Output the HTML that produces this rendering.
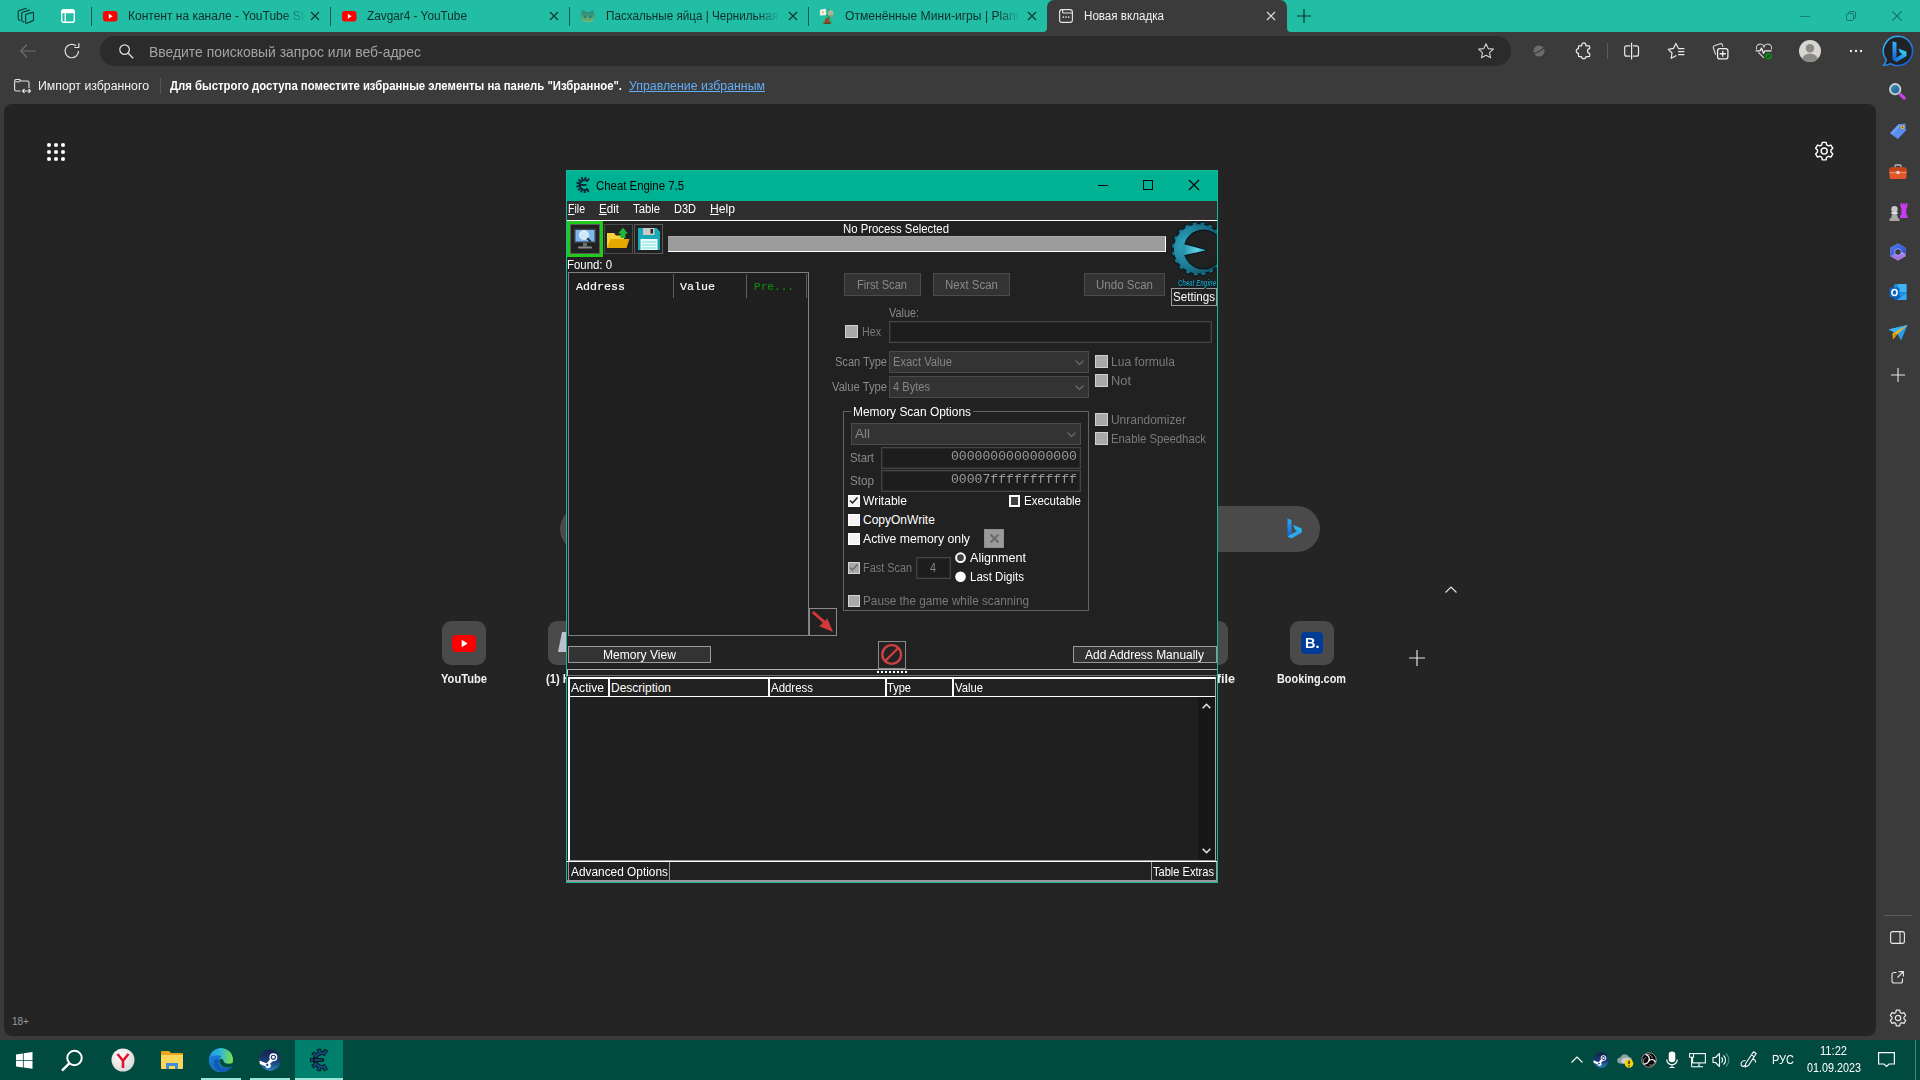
<!DOCTYPE html>
<html lang="ru"><head><meta charset="utf-8"><title>screen</title>
<style>

*{margin:0;padding:0;box-sizing:border-box}
html,body{width:1920px;height:1080px;overflow:hidden;background:#3b3b3b;font-family:"Liberation Sans",sans-serif}
.a{position:absolute}
.t{position:absolute;white-space:nowrap;transform-origin:0 50%;display:block;font-size:12px;line-height:16px;color:#fff}
.m{font-family:"Liberation Mono",monospace}
svg{position:absolute;overflow:visible}
/* browser */
#tabbar{left:0;top:0;width:1920px;height:32px;background:#21bda4}
#acttab{left:1047px;top:0;width:240px;height:33px;background:#3b3b3b;border-radius:7px 7px 0 0}
#addr{left:100px;top:36px;width:1411px;height:30px;border-radius:15px;background:#2b2b2b}
#content{left:4px;top:104px;width:1872px;height:932px;background:#242424;border-radius:8px}
#taskbar{left:0;top:1040px;width:1920px;height:40px;background:#014a3f}
/* cheat engine */
#ce{left:566px;top:170px;width:652px;height:713px;background:#212121;border:1px solid #1bb79d}
#cetitle{left:567px;top:171px;width:650px;height:30px;background:#00b294}
#cemenu{left:567px;top:201px;width:650px;height:19px;background:#2f2f2f}
.btn{position:absolute;background:#333;border:1px solid #4c4c4c}
.btnw{position:absolute;background:#333;border:1px solid #9a9a9a}
.inp{position:absolute;background:#1d1d1d;border:1px solid #454545;box-shadow:inset 0 0 0 1px #2a2a2a}
.cmb{position:absolute;background:#333;border:1px solid #4a4a4a}
.cbg{position:absolute;width:12px;height:12px;background:#a9a9a9;border:1px solid #cfcfcf}
.cbw{position:absolute;width:12px;height:12px;background:#f4f4f4;border:1px solid #fff}

</style></head><body>

<div class="a" id="tabbar"></div>
<div class="a" id="acttab"></div>
<div class="a" id="addr"></div>
<div class="a" id="content"></div>
<div class="a" id="taskbar"></div>
<div class="a" style="left:91px;top:7px;width:1px;height:19px;background:#14594e"></div>
<div class="a" style="left:330px;top:7px;width:1px;height:19px;background:#14594e"></div>
<div class="a" style="left:569px;top:7px;width:1px;height:19px;background:#14594e"></div>
<div class="a" style="left:808px;top:7px;width:1px;height:19px;background:#14594e"></div>
<svg style="left:1043px;top:28px" width="4" height="4"><path d="M4 0V4H0A4 4 0 0 0 4 0Z" fill="#3b3b3b"/></svg>
<svg style="left:1287px;top:28px" width="4" height="4"><path d="M0 0V4H4A4 4 0 0 1 0 0Z" fill="#3b3b3b"/></svg>
<svg style="left:0px;top:0px" width="40" height="32" viewBox="0 0 40 32" ><g fill="none" stroke="#123a33" stroke-width="1.150" stroke-linejoin="round" stroke-linecap="round"><path d="M26.300 14.300L32.500 12.400Q33.500 12.100 33.500 13.200V19.800Q33.500 20.600 32.700 20.900L26.800 23.300Q25.600 23.700 25.600 22.600V15.300Q25.600 14.500 26.300 14.300Z"/><path d="M29.400 10.100L22.500 12.300Q21.700 12.600 21.700 13.400V20.300Q21.700 21.100 22.500 21.500L23.800 22"/><path d="M26.300 8.200L19 10.600Q18.200 10.900 18.200 11.700V18.700Q18.200 19.500 19 19.900L20 20.400"/></g></svg>
<svg style="left:61px;top:9px" width="14" height="14" viewBox="0 0 14 14" ><rect x="0.7" y="0.7" width="12.6" height="12.6" rx="2" fill="none" stroke="#fff" stroke-width="1.4"/><path d="M0.7 4.2H13.3V2.7a2 2 0 0 0-2-2H2.7a2 2 0 0 0-2 2Z" fill="#fff"/><path d="M4.2 4V13.3" stroke="#fff" stroke-width="1.3"/></svg>
<svg style="left:102.75px;top:10.75px" width="14.5" height="10.5" viewBox="0 0 14.5 10.5" ><rect width="14.5" height="10.5" rx="3" fill="#f00"/><path d="M5.80 2.83L9.57 5.25L5.80 7.67Z" fill="#fff"/></svg>
<svg style="left:341.75px;top:10.75px" width="14.5" height="10.5" viewBox="0 0 14.5 10.5" ><rect width="14.5" height="10.5" rx="3" fill="#f00"/><path d="M5.80 2.83L9.57 5.25L5.80 7.67Z" fill="#fff"/></svg>
<svg style="left:580px;top:9px" width="16" height="15" viewBox="0 0 16 15" ><defs><linearGradient id="bn" x1="0" y1="0" x2="0" y2="1"><stop offset="0" stop-color="#2b8777"/><stop offset="0.450" stop-color="#3f9a7c"/><stop offset="1" stop-color="#86bd6c"/></linearGradient></defs><path d="M2.600 1.200C4 1.400 5 2.300 5.600 3.200Q7.700 2.500 9.800 3.200C10.400 2.300 11.400 1.400 12.800 1.200C14.300 3.300 14.800 5.600 14.600 8A7 6.300 0 0 1 0.800 8C0.600 5.600 1.100 3.300 2.600 1.200Z" fill="url(#bn)"/><ellipse cx="5" cy="7.700" rx="1.100" ry="1.500" fill="#2b7d72"/><ellipse cx="10.400" cy="7.700" rx="1.100" ry="1.500" fill="#2b7d72"/><path d="M4.600 10.800Q7.700 13 10.800 10.800" stroke="#5aa06a" stroke-width="0.900" fill="none"/></svg>
<svg style="left:819px;top:8px" width="16" height="16" viewBox="0 0 16 16" ><path d="M8.500 1L10.500 0.500L9.500 3.500Z" fill="#2f9a3c"/><path d="M5 5L12 8.500L10 11L8 8Z" fill="#2f9a3c"/><ellipse cx="11.700" cy="5.300" rx="2.700" ry="3.200" fill="#aab59a"/><path d="M10 7L13.500 6.500L14.200 11.500L12.800 9.300Z" fill="#8f9c86"/><circle cx="2.800" cy="3.200" r="1.900" fill="#f4ecec"/><circle cx="5.300" cy="2.600" r="1.900" fill="#f4ecec"/><circle cx="2.600" cy="5.800" r="1.900" fill="#f4ecec"/><circle cx="5.500" cy="5.500" r="1.900" fill="#f4ecec"/><circle cx="4" cy="4.300" r="1.900" fill="#f7eeee"/><circle cx="4" cy="4.300" r="1" fill="#e8c21a"/><path d="M6.500 10L10 10L11 15L5.500 15Z" fill="#9a4a2a"/><path d="M5 14.500L11.500 14.500L12 16L4.500 16Z" fill="#7a3a22"/><path d="M3.500 15.500L5.500 12.500L6 15.500ZM10.500 15.500L12 12.800L12.500 15.500Z" fill="#2f8f2f"/></svg>
<svg style="left:311px;top:12px" width="8" height="8" viewBox="0 0 8 8" ><path d="M0 0L8 8M8 0L0 8" stroke="#10332d" stroke-width="1.1" fill="none"/></svg>
<svg style="left:550px;top:12px" width="8" height="8" viewBox="0 0 8 8" ><path d="M0 0L8 8M8 0L0 8" stroke="#10332d" stroke-width="1.1" fill="none"/></svg>
<svg style="left:789px;top:12px" width="8" height="8" viewBox="0 0 8 8" ><path d="M0 0L8 8M8 0L0 8" stroke="#10332d" stroke-width="1.1" fill="none"/></svg>
<svg style="left:1028px;top:12px" width="8" height="8" viewBox="0 0 8 8" ><path d="M0 0L8 8M8 0L0 8" stroke="#10332d" stroke-width="1.1" fill="none"/></svg>
<svg style="left:1267px;top:12px" width="8" height="8" viewBox="0 0 8 8" ><path d="M0 0L8 8M8 0L0 8" stroke="#e6e6e6" stroke-width="1.1" fill="none"/></svg>
<svg style="left:1059px;top:9px" width="14" height="14" viewBox="0 0 14 14" ><rect x="0.6" y="0.6" width="12.8" height="12.8" rx="2.4" fill="none" stroke="#e8e8e8" stroke-width="1.1"/><path d="M3.6 0.8V3a1 1 0 0 0 1 1H13.300" fill="none" stroke="#e8e8e8" stroke-width="1.1"/><circle cx="4.300" cy="8" r="0.85" fill="#e8e8e8"/><circle cx="7" cy="8" r="0.85" fill="#e8e8e8"/><circle cx="9.700" cy="8" r="0.85" fill="#e8e8e8"/></svg>
<svg style="left:1297px;top:9px" width="14" height="14" viewBox="0 0 14 14" ><path d="M7 0V14M0 7H14" stroke="#10332d" stroke-width="1.2"/></svg>
<div class="a" style="left:1800px;top:16px;width:10px;height:1px;background:#17806f"></div>
<svg style="left:1846px;top:11px" width="10" height="10" viewBox="0 0 10 10" ><rect x="0.500" y="2.500" width="7" height="7" rx="1.400" fill="none" stroke="#167a6a" stroke-width="1"/><path d="M2.500 2.300V1.900a1.400 1.400 0 0 1 1.400-1.400H8.100a1.400 1.400 0 0 1 1.400 1.400V6.100a1.400 1.400 0 0 1-1.400 1.400H7.700" fill="none" stroke="#167a6a" stroke-width="1"/></svg>
<svg style="left:1892px;top:11px" width="10" height="10" viewBox="0 0 10 10" ><path d="M0.300 0.300L9.700 9.700M9.700 0.300L0.300 9.700" stroke="#176a5d" stroke-width="1.050"/></svg>
<svg style="left:20px;top:44px" width="16" height="14" viewBox="0 0 16 14" ><path d="M16 7H1M7 0.500L0.700 7L7 13.500" fill="none" stroke="#6f6f6f" stroke-width="1.1"/></svg>
<svg style="left:64px;top:43px" width="16" height="16" viewBox="0 0 16 16" ><path d="M14.5 8A6.700 6.700 0 1 1 12 2.800" fill="none" stroke="#e4e4e4" stroke-width="1.2"/><path d="M10.300 3.300H14.800V-1" fill="none" stroke="#e4e4e4" stroke-width="1.200" transform="translate(0,1.200)"/></svg>
<svg style="left:119px;top:44px" width="15" height="15" viewBox="0 0 15 15" ><circle cx="5.600" cy="5.600" r="4.800" fill="none" stroke="#e4e4e4" stroke-width="1.200"/><path d="M9.200 9.200L14.200 14.200" stroke="#e4e4e4" stroke-width="1.300"/></svg>
<svg style="left:1478px;top:43px" width="16" height="16" viewBox="0 0 16 16" ><path d="M8 0.800L10.200 5.600L15.400 6.100L11.500 9.700L12.600 14.800L8 12.200L3.400 14.800L4.500 9.700L0.600 6.100L5.800 5.600Z" fill="none" stroke="#cfcfcf" stroke-width="1.100" stroke-linejoin="round"/></svg>
<svg style="left:1533px;top:45px" width="12" height="12" viewBox="0 0 12 12" ><circle cx="6" cy="6" r="5.600" fill="#6b6b6b"/><path d="M1 8.500Q6 7 11 3.200" stroke="#3b3b3b" stroke-width="1.200" fill="none"/></svg>
<div class="a" style="left:1607px;top:43px;width:1px;height:16px;background:#5a5a5a"></div>
<svg style="left:1570px;top:38px" width="120" height="26" viewBox="0 0 120 26" ><g fill="none" stroke="#eaeaea" stroke-width="1.200" stroke-linejoin="round" stroke-linecap="round"><path d="M9.300 7.800H11.600C11.600 4 15.900 4 15.900 7.800H18.900Q19.700 7.800 19.700 8.600V10.600C16.800 10.600 16.800 15.300 19.700 15.300V17.900Q19.700 18.700 18.900 18.700H15.900C15.900 21.300 11.600 21.300 11.600 18.700H9.300Q8.500 18.700 8.500 17.900V15.300C5.500 15.300 5.500 10.600 8.500 10.600V8.600Q8.500 7.800 9.300 7.800Z"/><path d="M59.800 7.800H56.700a2 2 0 0 0-2 2V16.200a2 2 0 0 0 2 2H59.800M63.400 7.800H66.500a2 2 0 0 1 2 2V16.200a2 2 0 0 1-2 2H63.400M61.600 5V21"/><path d="M108.200 10L105.900 5.400L103.400 10.400L98.300 11.300L102 15L101.200 20.300L106 17.700"/><path d="M108.600 10.600H114M108.600 13.600H114M108.600 16.600H114"/></g></svg>
<svg style="left:1712px;top:43px" width="17" height="17" viewBox="0 0 17 17" ><rect x="5.600" y="5.600" width="10.300" height="10.300" rx="2.200" fill="none" stroke="#f2f2f2" stroke-width="1.250"/><path d="M10.750 7.700V13.800M7.700 10.750H13.800" stroke="#f2f2f2" stroke-width="1.300"/><path d="M3.700 11.800L1.300 4.800a1.700 1.700 0 0 1 1.100-2.100L8.200 0.800a1.700 1.700 0 0 1 2.100 1L11 3.600" fill="none" stroke="#dcdcdc" stroke-width="1.100"/></svg>
<svg style="left:1755px;top:43px" width="18" height="17" viewBox="0 0 18 17" ><path d="M9 14.800L3.500 9.500M1.600 6.300A3.900 3.900 0 0 1 9 3.800A3.900 3.900 0 0 1 16.400 6.300" fill="none" stroke="#dcdcdc" stroke-width="1.050"/><path d="M0.700 7.800H5.200L6.500 5L8.500 10.300L10 7.800H16.500" fill="none" stroke="#f4f4f4" stroke-width="1.250" stroke-linejoin="round"/><circle cx="13.500" cy="13.300" r="3.500" fill="#16801f"/><path d="M11.900 14.700L15.100 11.900" stroke="#0a4a12" stroke-width="1.300" fill="none"/></svg>
<svg style="left:1799px;top:40px" width="22" height="22" viewBox="0 0 22 22" ><defs><clipPath id="av"><circle cx="11" cy="11" r="11"/></clipPath></defs><circle cx="11" cy="11" r="11" fill="#d8d6d2"/><g clip-path="url(#av)" fill="#8d8a86"><circle cx="11" cy="8.300" r="4.200"/><ellipse cx="11" cy="20" rx="8" ry="6.500"/></g></svg>
<svg style="left:1849px;top:49px" width="14" height="4" viewBox="0 0 14 4" ><circle cx="2" cy="2" r="1.200" fill="#e4e4e4"/><circle cx="7" cy="2" r="1.200" fill="#e4e4e4"/><circle cx="12" cy="2" r="1.200" fill="#e4e4e4"/></svg>
<svg style="left:1881px;top:35px" width="34" height="32" viewBox="0 0 34 32" ><defs><linearGradient id="bg1" x1="0" y1="0" x2="1" y2="1"><stop offset="0" stop-color="#2fc8ff"/><stop offset="1" stop-color="#1452d6"/></linearGradient><linearGradient id="bg2" x1="0" y1="0" x2="0" y2="1"><stop offset="0" stop-color="#38b6f5"/><stop offset="1" stop-color="#1563dd"/></linearGradient><linearGradient id="bg3" x1="0" y1="1" x2="1" y2="0"><stop offset="0" stop-color="#1563dd"/><stop offset="1" stop-color="#31c4f0"/></linearGradient></defs><path d="M17 1.200A14.700 14.700 0 1 1 9.500 28.600Q6.500 30.200 2.700 30.200Q4.800 28 5.300 24.800A14.700 14.700 0 0 1 17 1.200Z" fill="#1f2227" stroke="url(#bg1)" stroke-width="1.500"/><path d="M11.500 6.200L15.500 7.600V22.800L11.500 24.600Z" fill="url(#bg2)"/><path d="M11.500 24.600L15.500 27L25.300 21.200V16.600L15.500 22.800Z" fill="url(#bg3)"/><path d="M17.300 13.400L25.300 16.600V21.200L22 19.200L19.200 18Z" fill="#2fc0ee"/></svg>
<svg style="left:14px;top:78px" width="17" height="16" viewBox="0 0 17 16" ><path d="M0.600 3a1.500 1.500 0 0 1 1.500-1.500H5.500L7 3H13.500a1.500 1.500 0 0 1 1.500 1.500V10M6.500 13H2.100a1.500 1.500 0 0 1-1.500-1.500V3.800H6" fill="none" stroke="#e4e4e4" stroke-width="1.100" stroke-linejoin="round"/><path d="M8.500 13H16.500M10.500 11L8.500 13L10.500 15M14.500 11L16.500 13L14.500 15" fill="none" stroke="#e4e4e4" stroke-width="1.100"/></svg>
<div class="a" style="left:160px;top:78px;width:1px;height:16px;background:#555"></div>
<svg style="left:1888px;top:82px" width="18" height="18" viewBox="0 0 18 18" ><defs><linearGradient id="sg" x1="0" y1="0" x2="1" y2="1"><stop offset="0" stop-color="#3a8fc0"/><stop offset="1" stop-color="#1a5f92"/></linearGradient></defs><circle cx="7.200" cy="7.200" r="5.200" fill="url(#sg)" stroke="#cfd2d4" stroke-width="1.800"/><path d="M11 11L13 13" stroke="#8f9a9a" stroke-width="1.600"/><path d="M12.800 12.800L16.200 16.200" stroke="#c840ea" stroke-width="3.200" stroke-linecap="round"/></svg>
<svg style="left:1889px;top:123px" width="18" height="17" viewBox="0 0 18 17" ><path d="M1 10L9.500 1.500L16.500 1L17 8L8.500 16Z" fill="#5b8def" transform="rotate(-3 9 8)"/><path d="M1 10L9.500 1.500L13 1.300L4 11.500Z" fill="#7fa8ff" opacity=".6"/><circle cx="13.600" cy="4.300" r="1.800" fill="#f5c400"/><circle cx="13.600" cy="4.300" r="0.800" fill="#5b4a00"/></svg>
<svg style="left:1889px;top:164px" width="18" height="16" viewBox="0 0 18 16" ><path d="M6 3.500V2a1 1 0 0 1 1-1H11a1 1 0 0 1 1 1V3.500" fill="none" stroke="#b9bcc0" stroke-width="1.300"/><rect x="0.500" y="3.500" width="17" height="11.500" rx="1.800" fill="#e2562a"/><rect x="0.500" y="3.500" width="17" height="5" rx="1.800" fill="#c7431d"/><rect x="0.500" y="7.800" width="17" height="1.400" fill="#f08a5a"/><rect x="7.500" y="7" width="3" height="3" rx="0.600" fill="#d9dde2"/></svg>
<svg style="left:1888px;top:202px" width="20" height="19" viewBox="0 0 20 19" ><path d="M12.500 1H14V2.500H15.200V1H16.700V2.500H17.900V1H19.400V5L18.300 6.200V12L19.500 14V16H12V14L13.400 12V6.200L12.500 5Z" fill="#c83cf0"/><circle cx="6.500" cy="7.300" r="3.200" fill="#c9c9c9"/><path d="M3.500 11H9.500L8.700 12.200L10.300 16.500H11.500V19H1.500V16.500H2.700L4.300 12.200Z" fill="#a9a9a9"/><ellipse cx="6.500" cy="11" rx="3.600" ry="1" fill="#e2e2e2"/></svg>
<svg style="left:1889px;top:243px" width="18" height="18" viewBox="0 0 18 18" ><defs><linearGradient id="m1" x1="0" y1="0" x2="1" y2="1"><stop offset="0" stop-color="#4f7ff0"/><stop offset="1" stop-color="#2a48c9"/></linearGradient><linearGradient id="m2" x1="0" y1="0" x2="1" y2="1"><stop offset="0" stop-color="#8fb8ff"/><stop offset="1" stop-color="#b58af0"/></linearGradient></defs><path d="M9 0.500L16.500 4.800V13.200L9 17.500L1.500 13.200V4.800Z" fill="url(#m2)"/><path d="M9 0.500L16.500 4.800V11L12.500 8.700V7L9 5L5.500 7V11L1.500 13.200V4.800Z" fill="url(#m1)"/><path d="M5.500 11L9 13L12.500 11L16.500 13.200L9 17.500L1.500 13.200Z" fill="#a077e0"/><path d="M6.300 7.500L9 6L11.700 7.500V10.500L9 12L6.300 10.500Z" fill="#3b3b3b"/></svg>
<svg style="left:1889px;top:283px" width="18" height="18" viewBox="0 0 18 18" ><rect x="5" y="1" width="12.500" height="16" rx="1.500" fill="#1c8fe0"/><rect x="9" y="1" width="8.500" height="8" fill="#3fb3f5"/><path d="M5 10L17.500 17H6.500a1.500 1.500 0 0 1-1.500-1.500Z" fill="#0f5fae"/><path d="M17.500 10V15.500a1.500 1.500 0 0 1-1.500 1.500H8Z" fill="#35a7ee"/><rect x="0.500" y="4.500" width="10" height="10" rx="1.200" fill="#0f64c0"/><ellipse cx="5.500" cy="9.500" rx="2.600" ry="3" fill="none" stroke="#fff" stroke-width="1.500"/></svg>
<svg style="left:1888px;top:323.5px" width="20" height="18" viewBox="0 0 20 18" ><path d="M0.500 5.500L19.500 1L13 16.500L9.500 10Z" fill="#2c9df0"/><path d="M0.500 5.500L19.500 1L9.500 10Z" fill="#3cb4ff"/><path d="M4.500 9.500L19.500 1L9.500 10L5 15.500Z" fill="#f2b418"/><path d="M9.500 10L5 15.500L6.500 9.600Z" fill="#c98a0a"/></svg>
<svg style="left:1890.5px;top:368px" width="14" height="14" viewBox="0 0 14 14" ><path d="M7 0V14M0 7H14" stroke="#e8e8e8" stroke-width="1.100"/></svg>
<div class="a" style="left:1884px;top:915px;width:28px;height:1px;background:#5c5c5c"></div>
<svg style="left:1890px;top:931px" width="15" height="13" viewBox="0 0 15 13" ><rect x="0.600" y="0.600" width="13.800" height="11.800" rx="2.200" fill="none" stroke="#e8e8e8" stroke-width="1.100"/><path d="M10 0.600V12.400" stroke="#e8e8e8" stroke-width="1.100"/></svg>
<svg style="left:1891px;top:971px" width="13" height="13" viewBox="0 0 13 13" ><path d="M5.500 1.500H3a2 2 0 0 0-2 2V10a2 2 0 0 0 2 2H9.500a2 2 0 0 0 2-2V7.500" fill="none" stroke="#e8e8e8" stroke-width="1.100"/><path d="M7.500 0.600H12.400V5.500M12.400 0.600L6.500 6.500" fill="none" stroke="#e8e8e8" stroke-width="1.100"/></svg><svg style="left:47px;top:143px" width="18" height="18" viewBox="0 0 18 18" ><circle cx="2" cy="2" r="2.050" fill="#fff"/><circle cx="2" cy="9" r="2.050" fill="#fff"/><circle cx="2" cy="16" r="2.050" fill="#fff"/><circle cx="9" cy="2" r="2.050" fill="#fff"/><circle cx="9" cy="9" r="2.050" fill="#fff"/><circle cx="9" cy="16" r="2.050" fill="#fff"/><circle cx="16" cy="2" r="2.050" fill="#fff"/><circle cx="16" cy="9" r="2.050" fill="#fff"/><circle cx="16" cy="16" r="2.050" fill="#fff"/></svg>
<svg style="left:1812.7px;top:140.8px" width="22.4" height="20.2" viewBox="0 0 20 18" ><g fill="none" stroke="#fff" stroke-width="1.25" stroke-linejoin="round"><path d="M8.300 1.200h3.400l.5 2.300 1.600.9 2.200-.8 1.700 2.900-1.700 1.600v1.800l1.700 1.600-1.700 2.900-2.200-.8-1.600.9-.5 2.300H8.300l-.5-2.300-1.600-.9-2.200.8-1.700-2.900L4 9.900V8.100L2.300 6.500 4 3.600l2.200.8 1.600-.9Z"/><circle cx="10" cy="9" r="2.700"/></g></svg>
<svg style="left:1888px;top:1009px" width="20" height="18" viewBox="0 0 20 18" ><g fill="none" stroke="#e8e8e8" stroke-width="1.2" stroke-linejoin="round"><path d="M8.300 1.200h3.400l.5 2.300 1.600.9 2.200-.8 1.700 2.900-1.700 1.600v1.800l1.700 1.600-1.700 2.900-2.200-.8-1.600.9-.5 2.300H8.300l-.5-2.300-1.600-.9-2.200.8-1.700-2.900L4 9.900V8.100L2.300 6.500 4 3.600l2.200.8 1.600-.9Z"/><circle cx="10" cy="9" r="2.700"/></g></svg>
<div class="a" style="left:560px;top:506px;width:760px;height:46px;background:#4a4a4a;border-radius:23px"></div>
<svg style="left:1287px;top:518px" width="16" height="21" viewBox="0 0 16 21" ><defs><linearGradient id="bl" x1="0" y1="0" x2="0" y2="1"><stop offset="0" stop-color="#2ea3f2"/><stop offset="1" stop-color="#1564d8"/></linearGradient><linearGradient id="bl2" x1="0" y1="0" x2="1" y2="1"><stop offset="0" stop-color="#3fd0f5"/><stop offset="1" stop-color="#1f86e8"/></linearGradient></defs><path d="M0.500 0.500L4.500 1.900V16.200L0.500 18.500Z" fill="url(#bl)"/><path d="M0.500 18.500L4.500 20.500L14.500 14.800V10.500L4.500 16.200Z" fill="url(#bl2)"/><path d="M6 6.800L14.500 10.500V14.800L10.500 13L8.300 12Z" fill="#27b4f2"/></svg>
<svg style="left:1445px;top:586px" width="12" height="7" viewBox="0 0 12 7" ><path d="M0.500 6.500L6 1L11.500 6.500" fill="none" stroke="#e8e8e8" stroke-width="1.100"/></svg>
<svg style="left:1409px;top:650px" width="16" height="16" viewBox="0 0 16 16" ><path d="M8 0V16M0 8H16" stroke="#e0e0e0" stroke-width="1.200"/></svg>
<div class="a" style="left:442px;top:621px;width:44px;height:44px;background:#4a4a4a;border-radius:9px"></div>
<div class="a" style="left:548px;top:621px;width:44px;height:44px;background:#4a4a4a;border-radius:9px"></div>
<div class="a" style="left:1184px;top:621px;width:44px;height:44px;background:#4a4a4a;border-radius:9px"></div>
<div class="a" style="left:1290px;top:621px;width:44px;height:44px;background:#4a4a4a;border-radius:9px"></div>
<svg style="left:452px;top:635px" width="24" height="17" viewBox="0 0 24 17" ><rect width="24" height="17" rx="4.500" fill="#f00"/><path d="M9.700 4.800L15.600 8.500L9.700 12.200Z" fill="#fff"/></svg>
<svg style="left:558px;top:632px" width="12" height="20" viewBox="0 0 12 20" ><path d="M4 0H12V20H0Z" fill="#b9c2cc"/></svg>
<div class="a" style="left:1301px;top:632px;width:22px;height:22px;background:#003b95;border-radius:4px"></div>
<div class="a" style="left:295px;top:1040px;width:48px;height:40px;background:#00806d"></div>
<div class="a" style="left:201px;top:1078px;width:40px;height:2px;background:#9ce6d8"></div>
<div class="a" style="left:250px;top:1078px;width:40px;height:2px;background:#9ce6d8"></div>
<div class="a" style="left:295px;top:1078px;width:48px;height:2px;background:#9ce6d8"></div>
<svg style="left:16px;top:1052px" width="17" height="17" viewBox="0 0 17 17" ><path d="M0 2.400L6.900 1.400V8H0ZM7.700 1.300L16.500 0V8H7.700ZM0 8.800H6.900V15.400L0 14.400ZM7.700 8.800H16.500V16.800L7.700 15.500Z" fill="#fff"/></svg>
<svg style="left:60px;top:1048px" width="24" height="24" viewBox="0 0 24 24" ><circle cx="14.500" cy="10" r="7.200" fill="none" stroke="#fff" stroke-width="2"/><path d="M9.300 15.400L2 22.700" stroke="#fff" stroke-width="2.400"/></svg>
<svg style="left:111px;top:1048px" width="24" height="24" viewBox="0 0 24 24" ><defs><radialGradient id="yg" cx="0.400" cy="0.350" r="0.700"><stop offset="0" stop-color="#fff"/><stop offset="1" stop-color="#d6d6d6"/></radialGradient></defs><circle cx="12" cy="12" r="11.500" fill="url(#yg)"/><path d="M6.500 6L12 12.800L17.500 6M12 12.500V20" fill="none" stroke="#e8112d" stroke-width="2.600"/></svg>
<svg style="left:161px;top:1050px" width="22" height="19" viewBox="0 0 22 19" ><path d="M0 2a1 1 0 0 1 1-1H8l2 2H21a1 1 0 0 1 1 1V18H0Z" fill="#e9a61c"/><path d="M0 5H22V18a1 1 0 0 1-1 1H1a1 1 0 0 1-1-1Z" fill="#fbd65a"/><path d="M5 13H17V19H14V16H8V19H5Z" fill="#3c8ddb"/></svg>
<svg style="left:209px;top:1048px" width="24" height="24" viewBox="0 0 24 24" ><defs><linearGradient id="e1" x1="0" y1="0.300" x2="1" y2="0.450"><stop offset="0" stop-color="#1f95e8"/><stop offset="0.450" stop-color="#2fb8d6"/><stop offset="1" stop-color="#7fe043"/></linearGradient><linearGradient id="e2" x1="0" y1="0" x2="1" y2="1"><stop offset="0" stop-color="#1b7fdc"/><stop offset="1" stop-color="#0f55b4"/></linearGradient></defs><circle cx="12" cy="12" r="12" fill="url(#e1)"/><path d="M0.300 9.500C-1 19 7 25.500 16 23.600C20 22.700 22.800 20 23.400 17.500C18.500 21 11.500 19.500 10.200 14.500C9.500 11.500 11 9 13 8C7 6 2 8 0.300 9.500Z" fill="url(#e2)"/><path d="M5 13C4 20 10 25 17 23.400C12 22.500 8 18 10 12C8 11 6 11.500 5 13Z" fill="#1258b8"/><path d="M10.300 13.200C10 10.500 13.800 10 14.300 12.500C14.800 15.500 19 16.800 24.300 14.800L23.600 17.800C19 20.800 11.200 19.800 10.300 13.200Z" fill="#014a3f"/></svg>
<svg style="left:259px;top:1049px" width="22" height="22" viewBox="0 0 24 24" ><defs><linearGradient id="st1" x1="0" y1="0" x2="0" y2="1"><stop offset="0" stop-color="#12224a"/><stop offset="0.600" stop-color="#1a3f7a"/><stop offset="1" stop-color="#2a86c2"/></linearGradient></defs><circle cx="12" cy="12" r="11.700" fill="url(#st1)"/><circle cx="15.700" cy="9" r="3.600" fill="none" stroke="#fff" stroke-width="1.500"/><circle cx="15.700" cy="9" r="1.600" fill="#fff"/><path d="M0.500 12.500L8 15.500A3 3 0 1 1 7 18.800L0.900 16.300Z" fill="#fff"/><path d="M12.300 10.500L8.500 15.500L11 17L15.800 12.800Z" fill="#fff"/><circle cx="9" cy="17.300" r="1.700" fill="#1a3f7a" stroke="#fff" stroke-width="0.800"/></svg>
<svg style="left:307px;top:1048px" width="24" height="24" viewBox="0 0 24 24" ><g fill="none"><path d="M19.300 5.300A8.300 8.300 0 1 0 19.300 18.700" stroke="#07151d" stroke-width="6.400" stroke-dasharray="3.300 2.100"/><path d="M19 6.300A7 7 0 1 0 19 17.700" stroke="#07151d" stroke-width="4.400"/><path d="M19.300 5.300A8.300 8.300 0 1 0 19.300 18.700" stroke="#0f4872" stroke-width="4.400" stroke-dasharray="2.300 3.100" stroke-dashoffset="-0.500"/><path d="M19 6.300A7 7 0 1 0 19 17.700" stroke="#0f4872" stroke-width="2.400"/><path d="M7 10L16.500 11V13L7 14Z" fill="#0f4872" stroke="#07151d" stroke-width="1.200"/></g></svg>
<svg style="left:1571px;top:1056px" width="12" height="7" viewBox="0 0 12 7" ><path d="M0.500 6.500L6 1L11.500 6.500" fill="none" stroke="#fff" stroke-width="1.200"/></svg>
<svg style="left:1593px;top:1052px" width="16" height="16" viewBox="0 0 24 24" ><defs><linearGradient id="st2" x1="0" y1="0" x2="0" y2="1"><stop offset="0" stop-color="#12224a"/><stop offset="0.600" stop-color="#1a3f7a"/><stop offset="1" stop-color="#2a86c2"/></linearGradient></defs><circle cx="12" cy="12" r="11.700" fill="url(#st2)"/><circle cx="15.700" cy="9" r="3.600" fill="none" stroke="#fff" stroke-width="1.500"/><circle cx="15.700" cy="9" r="1.600" fill="#fff"/><path d="M0.500 12.500L8 15.500A3 3 0 1 1 7 18.800L0.900 16.300Z" fill="#fff"/><path d="M12.300 10.500L8.500 15.500L11 17L15.800 12.800Z" fill="#fff"/><circle cx="9" cy="17.300" r="1.700" fill="#1a3f7a" stroke="#fff" stroke-width="0.800"/></svg>
<svg style="left:1616px;top:1053px" width="18" height="15" viewBox="0 0 18 15" ><path d="M4 10.500A3 3 0 0 1 4.500 4.500A4.500 4.500 0 0 1 13 4A3.300 3.300 0 0 1 13.500 10.500Z" fill="#8fa3a0"/><path d="M6 10.500A3.500 3.500 0 0 1 9 5A4 4 0 0 1 14 6A2.500 2.500 0 0 1 13.500 10.500Z" fill="#c9d4d2"/><circle cx="13" cy="10.500" r="4.300" fill="#f4d20a"/><path d="M13 7.800V11" stroke="#1a1a1a" stroke-width="1.400"/><circle cx="13" cy="12.700" r="0.800" fill="#1a1a1a"/></svg>
<svg style="left:1641px;top:1052px" width="16" height="16" viewBox="0 0 16 16" ><circle cx="8" cy="8" r="7.900" fill="#070707"/><circle cx="8" cy="8" r="7.300" fill="none" stroke="#d8d8d8" stroke-width="0.700"/><g fill="none" stroke="#f0f0f0" stroke-width="1.350" stroke-linecap="round"><path d="M8.200 8.300C8.600 5.800 7.300 3.600 5 2.700"/><path d="M8.200 8.300C10.300 7 12.900 7.600 14.200 9.500"/><path d="M8.200 8.300C7.300 10.600 5.200 12.200 2.900 11.900"/></g><g fill="none" stroke="#cfcfcf" stroke-width="0.700"><path d="M5 2.700C8 1.800 10.800 3.300 11.300 6"/><path d="M14.200 9.500C13.300 12.600 10.300 13.900 8 12.900"/><path d="M2.900 11.900C1.500 9.300 2.700 6.300 5 5.400"/></g></svg>
<svg style="left:1666px;top:1051px" width="12" height="18" viewBox="0 0 12 18" ><rect x="2.700" y="0.600" width="6.600" height="10.600" rx="3.300" fill="#fff"/><path d="M0.700 8.500A5.300 5.300 0 0 0 11.300 8.500M6 13.800V16.300M3.500 16.500H8.500" fill="none" stroke="#fff" stroke-width="1.100"/></svg>
<svg style="left:1689px;top:1053px" width="17" height="15" viewBox="0 0 17 15" ><rect x="3.600" y="0.600" width="12.800" height="9.300" fill="none" stroke="#fff" stroke-width="1.100"/><path d="M10 10V13.500M5.500 13.800H14" stroke="#fff" stroke-width="1.100"/><rect x="0.600" y="0.600" width="4" height="3.600" fill="#014a3f" stroke="#fff" stroke-width="1"/><path d="M2.600 4.200V13.800H6" fill="none" stroke="#fff" stroke-width="1"/></svg>
<svg style="left:1712px;top:1052px" width="18" height="16" viewBox="0 0 18 16" ><path d="M1 5.500H3.500L7.500 1.500V14.500L3.500 10.500H1Z" fill="none" stroke="#fff" stroke-width="1.100" stroke-linejoin="round"/><path d="M9.500 5.500A3.500 3.500 0 0 1 9.500 10.500" fill="none" stroke="#fff" stroke-width="1.100"/><path d="M11.500 3.500A6 6 0 0 1 11.500 12.500" fill="none" stroke="#fff" stroke-width="1.100"/><path d="M13.800 1.500A8.500 8.500 0 0 1 13.800 14.500" fill="none" stroke="#4d8a80" stroke-width="1.100"/></svg>
<svg style="left:1740px;top:1051px" width="18" height="18" viewBox="0 0 18 18" ><path d="M13.500 0.800L16.200 2.500L8.500 14.500L5.200 16L5.700 12.500Z" fill="none" stroke="#fff" stroke-width="1.100" stroke-linejoin="round"/><path d="M11.500 4L14.200 5.700" stroke="#fff" stroke-width="1"/><path d="M5.500 9.500C2 9.500 0.500 12 1.200 14C2 16 4 15.500 5 14.500M12 8.500C15 8 16.500 10 15 11.500" fill="none" stroke="#fff" stroke-width="1.100"/></svg>
<svg style="left:1878px;top:1052px" width="17" height="17" viewBox="0 0 17 17" ><path d="M0.600 0.600H16.400V12H11L8.500 14.500L6 12H0.600Z" fill="none" stroke="#fff" stroke-width="1.200"/></svg>
<div class="a" style="left:1915px;top:1040px;width:1px;height:40px;background:#4d8278"></div>
<span class="t" style="left:128px;top:8px;color:#0f2f2a;-webkit-mask-image:linear-gradient(90deg,#000 88%,transparent 101%)">Контент на канале - YouTube St</span>
<span class="t" style="left:367px;top:8px;color:#0f2f2a;transform:scaleX(0.9840)">Zavgar4 - YouTube</span>
<span class="t" style="left:606px;top:8px;color:#0f2f2a;-webkit-mask-image:linear-gradient(90deg,#000 88%,transparent 101%);transform:scaleX(0.9738)">Пасхальные яйца | Чернильная</span>
<span class="t" style="left:845px;top:8px;color:#0f2f2a;-webkit-mask-image:linear-gradient(90deg,#000 88%,transparent 101%);transform:scaleX(1.0088)">Отменённые Мини-игры | Plant</span>
<span class="t" style="left:1084px;top:8px;color:#f0f0f0;transform:scaleX(0.9671)">Новая вкладка</span>
<span class="t" style="left:149px;top:42.5px;font-size:14px;line-height:18px;color:#a3a3a3;transform:scaleX(0.9943)">Введите поисковый запрос или веб-адрес</span>
<span class="t" style="left:38px;top:78px;color:#f2f2f2;transform:scaleX(1.0250)">Импорт избранного</span>
<span class="t" style="left:170px;top:78px;font-weight:bold;transform:scaleX(0.9452)">Для быстрого доступа поместите избранные элементы на панель "Избранное".</span>
<span class="t" style="left:629px;top:78px;color:#62aef2;text-decoration:underline;text-underline-offset:1px;transform:scaleX(1.0267)">Управление избранным</span>
<span class="t" style="left:441px;top:671px;font-size:12.5px;color:#f2f2f2;font-weight:bold;transform:scaleX(0.8910)">YouTube</span>
<span class="t" style="left:546px;top:671px;font-size:12.5px;color:#f2f2f2;font-weight:bold;transform:scaleX(0.8975)">(1) Hitfile</span>
<span class="t" style="left:1200px;top:671px;font-size:12.5px;color:#f2f2f2;font-weight:bold;transform:scaleX(1.0076)">Hitfile</span>
<span class="t" style="left:1277px;top:671px;font-size:12.5px;color:#f2f2f2;font-weight:bold;transform:scaleX(0.8715)">Booking.com</span>
<span class="t" style="left:1305px;top:634px;font-size:15px;line-height:18px;font-weight:bold;transform:scaleX(0.9667)">B.</span>
<span class="t" style="left:12px;top:1016px;font-size:10px;line-height:12px;color:#9a9a9a">18+</span>
<span class="t" style="left:1772px;top:1052px;transform:scaleX(0.9155)">РУС</span>
<span class="t" style="left:1820px;top:1043px;transform:scaleX(0.9265)">11:22</span>
<span class="t" style="left:1807px;top:1060px;transform:scaleX(0.8991)">01.09.2023</span>

<div class="a" id="ce"></div>
<div class="a" id="cetitle"></div>
<div class="a" id="cemenu"></div>
<svg style="left:1098px;top:185px" width="10" height="1" viewBox="0 0 10 1" ><rect width="10" height="1" fill="#000"/></svg>
<svg style="left:1143px;top:180px" width="10" height="10" viewBox="0 0 10 10" ><rect x="0.5" y="0.5" width="9" height="9" fill="none" stroke="#000" stroke-width="1"/></svg>
<svg style="left:1189px;top:180px" width="10" height="10" viewBox="0 0 10 10" ><path d="M0 0L10 10M10 0L0 10" stroke="#000" stroke-width="1.1"/></svg>
<svg style="left:575px;top:177px" width="16" height="16" viewBox="-0.5 -0.5 16 16" ><g fill="none" stroke="#0b2a35" stroke-width="2"><path d="M13 3.2A6 6 0 1 0 13 11.800" stroke-dasharray="1.7 1.1" stroke-width="4.2"/><path d="M12.500 3.800A5 5 0 1 0 12.500 11.200"/><path d="M3.500 7.500H11" /></g></svg>
<div class="a" style="left:567px;top:220px;width:650px;height:1px;background:#fff"></div>
<div class="a" style="left:567px;top:221px;width:36px;height:36px;background:#212121;border:3px solid #22c91c"></div>
<div class="a" style="left:570px;top:224px;width:30px;height:30px;border:1px solid #5a5a5a"></div>
<div class="a" style="left:604px;top:224px;width:29px;height:30px;border:1px solid #4b4b4b"></div>
<div class="a" style="left:634px;top:224px;width:29px;height:30px;border:1px solid #5a5a5a"></div>
<svg style="left:573px;top:227px" width="24" height="24" viewBox="0 0 24 24" ><rect x="1" y="1.500" width="22" height="14.500" fill="#3a3f45"/><rect x="2.500" y="3" width="19" height="11.500" fill="#7db7f0"/><rect x="10" y="16" width="4" height="3.500" fill="#6d6d6d"/><rect x="5" y="19.500" width="14" height="2" rx="1" fill="#8a8a8a"/><circle cx="11" cy="8" r="4.300" fill="#cfe9fb" stroke="#e9eef2" stroke-width="1.300"/><path d="M14.200 11.200L18 15" stroke="#23303c" stroke-width="1.800"/></svg>
<svg style="left:606px;top:227px" width="25" height="24" viewBox="0 0 25 24" ><path d="M1 6h7l2 2.500h8V21H1Z" fill="#f7d23a"/><path d="M4.500 12H23.500L20.500 21H1Z" fill="#e6a800"/><path d="M14.500 11V6.500H12L17 0.800L22 6.500H19.500V11Z" fill="#1fb53f"/></svg>
<svg style="left:637px;top:227px" width="24" height="24" viewBox="0 0 24 24" ><path d="M1 1H19.500L23 4.500V23H1Z" fill="#17a9b7"/><rect x="6" y="1" width="11.500" height="7" fill="#c9c9c9"/><rect x="13.500" y="2" width="2.500" height="4.500" fill="#2a2a2a"/><rect x="3.500" y="12" width="17" height="11" fill="#e8fbfb"/><path d="M5 15H19M5 18H19M5 21H19" stroke="#7fd9d9" stroke-width="1"/></svg>
<div class="a" style="left:668px;top:236px;width:498px;height:16px;background:#9b9b9b;border-right:1px solid #fff;border-bottom:1px solid #fff;border-top:1px solid #a8a8a8"></div>
<svg style="left:1170px;top:221px;overflow:hidden" width="47" height="58" viewBox="0 0 47 58"><defs><radialGradient id="lg" cx="16" cy="24" r="34" gradientUnits="userSpaceOnUse"><stop offset="0" stop-color="#2fa6c0"/><stop offset="0.550" stop-color="#1f7f98"/><stop offset="1" stop-color="#155a70"/></radialGradient><linearGradient id="lt" x1="12" y1="0" x2="37" y2="0" gradientUnits="userSpaceOnUse"><stop offset="0" stop-color="#238aa5"/><stop offset="0.600" stop-color="#5fd2e8"/><stop offset="1" stop-color="#2a9ab4"/></linearGradient></defs><g fill="#06161c" stroke="#06161c" stroke-width="2.200" stroke-linejoin="round"><circle cx="28.600" cy="27.900" r="25.600" fill="none" stroke-width="4.200" stroke-dasharray="4.600 3.440"/><path fill-rule="evenodd" d="M28.600 3.200A24.700 24.700 0 1 0 28.600 52.600A24.700 24.700 0 1 0 28.600 3.200ZM33.400 8.600A19.900 19.900 0 1 1 33.400 48.400A19.900 19.900 0 1 1 33.400 8.600Z"/><path d="M12.500 22.800L36.400 29.200L12.500 34.400Z"/></g><circle cx="28.600" cy="27.900" r="25.400" fill="none" stroke="#1b7189" stroke-width="2.400" stroke-dasharray="3.800 4.240" stroke-dashoffset="-0.400"/><path fill-rule="evenodd" d="M28.600 3.200A24.700 24.700 0 1 0 28.600 52.600A24.700 24.700 0 1 0 28.600 3.200ZM33.400 8.600A19.900 19.900 0 1 1 33.400 48.400A19.900 19.900 0 1 1 33.400 8.600Z" fill="url(#lg)"/><path d="M12.500 22.800L36.400 29.200L12.500 34.400Z" fill="url(#lt)"/></svg>
<div class="btn" style="left:844px;top:273px;width:77px;height:23px;"></div>
<div class="btn" style="left:933px;top:273px;width:77px;height:23px;"></div>
<div class="btn" style="left:1084px;top:273px;width:81px;height:23px;"></div>
<div class="a" style="left:1171px;top:288px;width:46px;height:18px;border:1px solid #9a9a9a;background:#222"></div>
<div class="a" style="left:568px;top:272px;width:241px;height:364px;border:1px solid #7d8088;background:#1f1f1f"></div>
<div class="a" style="left:673px;top:274px;width:1px;height:24px;background:#5e5e5e"></div>
<div class="a" style="left:746px;top:274px;width:1px;height:24px;background:#5e5e5e"></div>
<div class="a" style="left:806px;top:274px;width:1px;height:24px;background:#5e5e5e"></div>
<div class="cbg" style="left:845px;top:325px;width:13px;height:13px;"></div>
<div class="inp" style="left:889px;top:321px;width:323px;height:22px;"></div>
<div class="cmb" style="left:889px;top:351px;width:200px;height:22px;"></div>
<svg style="left:1075px;top:360px" width="9" height="5" viewBox="0 0 9 5" ><path d="M0.500 0.500L4.500 4.500L8.500 0.500" fill="none" stroke="#6c6c6c" stroke-width="1.100"/></svg>
<div class="cmb" style="left:889px;top:376px;width:200px;height:22px;"></div>
<svg style="left:1075px;top:385px" width="9" height="5" viewBox="0 0 9 5" ><path d="M0.500 0.500L4.500 4.500L8.500 0.500" fill="none" stroke="#6c6c6c" stroke-width="1.100"/></svg>
<div class="cbg" style="left:1095px;top:355px;width:13px;height:13px;"></div>
<div class="cbg" style="left:1095px;top:374px;width:13px;height:13px;"></div>
<div class="cbg" style="left:1095px;top:413px;width:13px;height:13px;"></div>
<div class="cbg" style="left:1095px;top:432px;width:13px;height:13px;"></div>
<div class="a" style="left:843px;top:411px;width:246px;height:200px;border:1px solid #646464"></div>
<div class="a" style="left:851px;top:405px;width:122px;height:14px;background:#212121"></div>
<div class="cmb" style="left:851px;top:423px;width:230px;height:22px;"></div>
<svg style="left:1067px;top:432px" width="9" height="5" viewBox="0 0 9 5" ><path d="M0.500 0.500L4.500 4.500L8.500 0.500" fill="none" stroke="#6c6c6c" stroke-width="1.100"/></svg>
<div class="inp" style="left:881px;top:447px;width:200px;height:22px;"></div>
<div class="inp" style="left:881px;top:470px;width:200px;height:22px;"></div>
<div class="cbw" style="left:848px;top:495px;width:12px;height:12px;"></div>
<svg style="left:848px;top:495px" width="12" height="12" viewBox="0 0 12 12" ><path d="M2 5.500L4.500 8L9.500 2.500" fill="none" stroke="#222" stroke-width="1.500"/></svg>
<div class="cbw" style="left:848px;top:514px;width:12px;height:12px;"></div>
<div class="cbw" style="left:848px;top:533px;width:12px;height:12px;"></div>
<div class="a" style="left:1009px;top:495px;width:11px;height:12px;background:#fff"></div>
<div class="a" style="left:1011px;top:497px;width:7px;height:8px;background:#414141"></div>
<div class="a" style="left:984px;top:529px;width:20px;height:19px;background:#9a9a9a;border:1px solid #8e8e8e"></div>
<svg style="left:990px;top:534px" width="9" height="9" viewBox="0 0 9 9" ><path d="M0.500 0.500L8.500 8.500M8.500 0.500L0.500 8.500" stroke="#6a6a6a" stroke-width="2"/></svg>
<div class="a" style="left:848px;top:562px;width:12px;height:12px;background:#a9a9a9;border:1px solid #d5d5d5"></div>
<svg style="left:848px;top:562px" width="12" height="12" viewBox="0 0 12 12" ><path d="M2 5.500L4.500 8L9.500 2.500" fill="none" stroke="#6a6a6a" stroke-width="1.500"/></svg>
<div class="inp" style="left:916px;top:557px;width:35px;height:22px;"></div>
<svg style="left:955px;top:552px" width="12" height="12" viewBox="0 0 12 12" ><circle cx="5.500" cy="5.700" r="4.400" fill="#424242" stroke="#fff" stroke-width="2"/></svg>
<svg style="left:955px;top:571px" width="12" height="12" viewBox="0 0 12 12" ><circle cx="5.500" cy="5.700" r="5.300" fill="#fff"/></svg>
<div class="a" style="left:848px;top:595px;width:12px;height:12px;background:#a9a9a9;border:1px solid #d5d5d5"></div>
<div class="a" style="left:809px;top:608px;width:28px;height:28px;border:1px solid #8a8a8a;background:#212121"></div>
<svg style="left:811px;top:610px" width="24" height="24" viewBox="0 0 24 24" ><path d="M1.800 2L14 12.600" stroke="#d23a3a" stroke-width="2.900"/><path d="M16.400 8.500L22 21.900L8.300 16.300Z" fill="#d23a3a"/></svg>
<div class="btnw" style="left:568px;top:646px;width:143px;height:17px;"></div>
<div class="a" style="left:878px;top:641px;width:28px;height:28px;border:1px solid #8a8a8a;background:#232323"></div>
<svg style="left:880px;top:643px" width="23" height="23" viewBox="0 0 23 23" ><circle cx="11.700" cy="11.500" r="9.400" fill="none" stroke="#d04040" stroke-width="2.400"/><path d="M5.200 18L18.200 5" stroke="#d04040" stroke-width="2.400"/></svg>
<div class="btnw" style="left:1073px;top:646px;width:144px;height:17px;"></div>
<div class="a" style="left:567px;top:669px;width:650px;height:1px;background:#b0b0b0"></div>
<div class="a" style="left:567px;top:670px;width:1px;height:6px;background:#d0d0d0"></div>
<div class="a" style="left:568px;top:675px;width:649px;height:1px;background:#6e6e6e"></div>
<svg style="left:877px;top:671px" width="30" height="2" viewBox="0 0 30 2" ><path d="M0 1H30" stroke="#fff" stroke-width="2" stroke-dasharray="2 2"/></svg>
<div class="a" style="left:568px;top:677px;width:648px;height:184px;border-top:2px solid #fff;border-left:2px solid #fff;border-right:1px solid #a8a8a8;border-bottom:1px solid #9a9a9a;background:#1f1f1f"></div>
<div class="a" style="left:570px;top:679px;width:645px;height:17px;background:#212121"></div>
<div class="a" style="left:608px;top:679px;width:2px;height:18px;background:#fff"></div>
<div class="a" style="left:768px;top:679px;width:2px;height:18px;background:#fff"></div>
<div class="a" style="left:885px;top:679px;width:2px;height:18px;background:#fff"></div>
<div class="a" style="left:952px;top:679px;width:2px;height:18px;background:#fff"></div>
<div class="a" style="left:570px;top:696px;width:645px;height:1px;background:#fff"></div>
<div class="a" style="left:1198px;top:697px;width:17px;height:163px;background:#171717"></div>
<svg style="left:1202px;top:703px" width="9" height="6" viewBox="0 0 9 6" ><path d="M0.700 5.300L4.500 1.300L8.300 5.300" fill="none" stroke="#e6e6e6" stroke-width="1.600"/></svg>
<svg style="left:1202px;top:848px" width="9" height="6" viewBox="0 0 9 6" ><path d="M0.700 0.700L4.500 4.700L8.300 0.700" fill="none" stroke="#e6e6e6" stroke-width="1.600"/></svg>
<div class="a" style="left:567px;top:861px;width:650px;height:1px;background:#fff"></div>
<div class="a" style="left:567px;top:880px;width:650px;height:2px;background:#9a9a9a"></div>
<div class="a" style="left:568px;top:862px;width:102px;height:20px;border:1px solid #9a9a9a;border-top:none"></div>
<div class="a" style="left:1151px;top:862px;width:66px;height:20px;border:1px solid #9a9a9a;border-top:none"></div>
<span class="t" style="left:596px;top:178px;color:#000;transform:scaleX(0.9488)">Cheat Engine 7.5</span>
<span class="t" style="left:568px;top:201px;transform:scaleX(0.8781)"><u>F</u>ile</span>
<span class="t" style="left:599px;top:201px;transform:scaleX(0.9660)"><u>E</u>dit</span>
<span class="t" style="left:633px;top:201px;transform:scaleX(0.9412)">Table</span>
<span class="t" style="left:674px;top:201px;transform:scaleX(0.9161)">D3D</span>
<span class="t" style="left:710px;top:201px;transform:scaleX(1.0127)"><u>H</u>elp</span>
<span class="t" style="left:843px;top:221px;transform:scaleX(0.9459)">No Process Selected</span>
<span class="t" style="left:567px;top:257px;transform:scaleX(0.9499)">Found: 0</span>
<span class="t m" style="left:576px;top:278.5px;font-size:11.5px;-webkit-text-stroke:0.180px #fff;transform:scaleX(1.0142)">Address</span>
<span class="t m" style="left:680px;top:278.5px;font-size:11.5px;-webkit-text-stroke:0.180px #fff;transform:scaleX(1.0140)">Value</span>
<span class="t m" style="left:754px;top:278.5px;font-size:11.5px;color:#0c8a0c;-webkit-text-stroke:0.180px #0c8a0c;transform:scaleX(0.9657)">Pre...</span>
<span class="t" style="left:857px;top:277px;color:#8a8a8a;transform:scaleX(0.9257)">First Scan</span>
<span class="t" style="left:945px;top:277px;color:#8a8a8a;transform:scaleX(0.9574)">Next Scan</span>
<span class="t" style="left:1096px;top:277px;color:#8a8a8a;transform:scaleX(0.9600)">Undo Scan</span>
<span class="t" style="left:1173px;top:289px;transform:scaleX(0.9686)">Settings</span>
<span class="t" style="left:1178px;top:277.5px;font-size:8.5px;line-height:10px;color:#2396b0;font-weight:bold;font-style:italic;text-shadow:0 0 1px #04141a,0.500px 0.500px 0 #04141a,-0.500px -0.500px 0 #04141a;transform:scaleX(0.6997)">Cheat Engine</span>
<span class="t" style="left:889px;top:305px;color:#8a8a8a;transform:scaleX(0.9052)">Value:</span>
<span class="t" style="left:862px;top:324px;color:#7a7a7a;transform:scaleX(0.8902)">Hex</span>
<span class="t" style="left:835px;top:354px;color:#8a8a8a;transform:scaleX(0.9206)">Scan Type</span>
<span class="t" style="left:893px;top:354px;color:#858585;transform:scaleX(0.9342)">Exact Value</span>
<span class="t" style="left:832px;top:379px;color:#8a8a8a;transform:scaleX(0.9332)">Value Type</span>
<span class="t" style="left:893px;top:379px;color:#858585;transform:scaleX(0.9243)">4 Bytes</span>
<span class="t" style="left:1111px;top:354px;color:#7a7a7a;transform:scaleX(1.0099)">Lua formula</span>
<span class="t" style="left:1111px;top:373px;color:#7a7a7a;transform:scaleX(1.0702)">Not</span>
<span class="t" style="left:853px;top:404px;transform:scaleX(0.9939)">Memory Scan Options</span>
<span class="t" style="left:855px;top:426px;color:#858585;transform:scaleX(1.1241)">All</span>
<span class="t" style="left:1111px;top:412px;color:#7a7a7a;transform:scaleX(0.9950)">Unrandomizer</span>
<span class="t" style="left:1111px;top:431px;color:#7a7a7a;transform:scaleX(0.9429)">Enable Speedhack</span>
<span class="t" style="left:850px;top:450px;color:#8a8a8a;transform:scaleX(0.9470)">Start</span>
<span class="t" style="left:850px;top:473px;color:#8a8a8a;transform:scaleX(0.9722)">Stop</span>
<span class="t m" style="left:951px;top:449px;font-size:12.5px;color:#9a9a9a;transform:scaleX(1.0497)">0000000000000000</span>
<span class="t m" style="left:951px;top:472px;font-size:12.5px;color:#9a9a9a;transform:scaleX(1.0497)">00007fffffffffff</span>
<span class="t" style="left:863px;top:493px;transform:scaleX(1.0046)">Writable</span>
<span class="t" style="left:1024px;top:493px;transform:scaleX(0.9600)">Executable</span>
<span class="t" style="left:863px;top:512px">CopyOnWrite</span>
<span class="t" style="left:863px;top:531px;transform:scaleX(1.0219)">Active memory only</span>
<span class="t" style="left:863px;top:560px;color:#7a7a7a;transform:scaleX(0.9069)">Fast Scan</span>
<span class="t" style="left:930px;top:560px;color:#858585;transform:scaleX(0.8972)">4</span>
<span class="t" style="left:970px;top:550px;transform:scaleX(1.0492)">Alignment</span>
<span class="t" style="left:970px;top:569px;transform:scaleX(0.9637)">Last Digits</span>
<span class="t" style="left:863px;top:593px;color:#7a7a7a;transform:scaleX(0.9796)">Pause the game while scanning</span>
<span class="t" style="left:603px;top:647px;transform:scaleX(1.0073)">Memory View</span>
<span class="t" style="left:1085px;top:647px;transform:scaleX(0.9966)">Add Address Manually</span>
<span class="t" style="left:571px;top:680px;transform:scaleX(1.0096)">Active</span>
<span class="t" style="left:611px;top:680px">Description</span>
<span class="t" style="left:771px;top:680px;transform:scaleX(0.9539)">Address</span>
<span class="t" style="left:887px;top:680px;transform:scaleX(0.9225)">Type</span>
<span class="t" style="left:955px;top:680px;transform:scaleX(0.9392)">Value</span>
<span class="t" style="left:571px;top:864px;transform:scaleX(0.9892)">Advanced Options</span>
<span class="t" style="left:1153px;top:864px;transform:scaleX(0.9238)">Table Extras</span>
</body></html>
